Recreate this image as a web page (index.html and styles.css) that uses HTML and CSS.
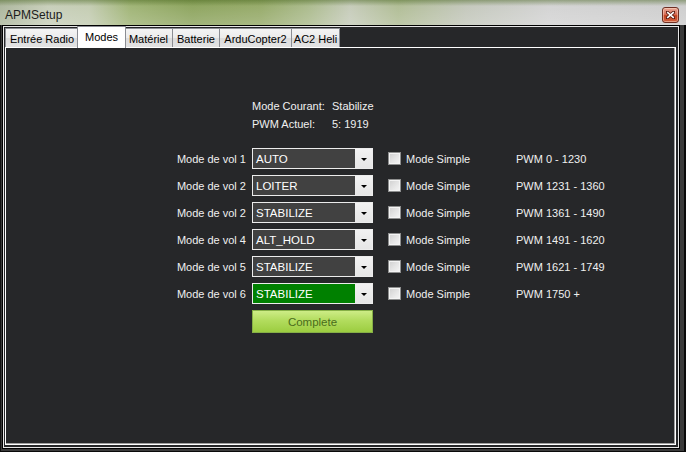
FILE: index.html
```html
<!DOCTYPE html>
<html>
<head>
<meta charset="utf-8">
<link rel="stylesheet" href="styles.css">
</head>
<body>
<div class="window">
  <div class="titlebar">
    <span class="title">APMSetup</span>
    <div class="close">
      <svg width="9" height="8" viewBox="0 0 9 8"><path d="M1 1 L8 7 M8 1 L1 7" stroke="#5a1a10" stroke-width="3.2" stroke-linecap="square"/><path d="M1.2 1.2 L7.8 6.8 M7.8 1.2 L1.2 6.8" stroke="#fff" stroke-width="1.6"/></svg>
    </div>
  </div>
  <div class="client">
    <div class="tabs">
      <div class="tab t1">Entrée Radio</div>
      <div class="tab t2 active">Modes</div>
      <div class="tab t3">Matériel</div>
      <div class="tab t4">Batterie</div>
      <div class="tab t5">ArduCopter2</div>
      <div class="tab t6">AC2 Heli</div>
    </div>
    <div class="panel">
      <div class="info">
        <div class="info-row"><span class="key">Mode Courant:</span><span>Stabilize</span></div>
        <div class="info-row"><span class="key">PWM Actuel:</span><span>5: 1919</span></div>
      </div>
      <div class="rows">
        <div class="row">
          <span class="label">Mode de vol 1</span>
          <div class="combo"><span class="val">AUTO</span><span class="btn"><span class="arrow"></span></span></div>
          <span class="cb"></span><span class="simple">Mode Simple</span><span class="pwm">PWM 0 - 1230</span>
        </div>
        <div class="row">
          <span class="label">Mode de vol 2</span>
          <div class="combo"><span class="val">LOITER</span><span class="btn"><span class="arrow"></span></span></div>
          <span class="cb"></span><span class="simple">Mode Simple</span><span class="pwm">PWM 1231 - 1360</span>
        </div>
        <div class="row">
          <span class="label">Mode de vol 2</span>
          <div class="combo"><span class="val">STABILIZE</span><span class="btn"><span class="arrow"></span></span></div>
          <span class="cb"></span><span class="simple">Mode Simple</span><span class="pwm">PWM 1361 - 1490</span>
        </div>
        <div class="row">
          <span class="label">Mode de vol 4</span>
          <div class="combo"><span class="val">ALT_HOLD</span><span class="btn"><span class="arrow"></span></span></div>
          <span class="cb"></span><span class="simple">Mode Simple</span><span class="pwm">PWM 1491 - 1620</span>
        </div>
        <div class="row">
          <span class="label">Mode de vol 5</span>
          <div class="combo"><span class="val">STABILIZE</span><span class="btn"><span class="arrow"></span></span></div>
          <span class="cb"></span><span class="simple">Mode Simple</span><span class="pwm">PWM 1621 - 1749</span>
        </div>
        <div class="row">
          <span class="label">Mode de vol 6</span>
          <div class="combo current"><span class="val">STABILIZE</span><span class="btn"><span class="arrow"></span></span></div>
          <span class="cb"></span><span class="simple">Mode Simple</span><span class="pwm">PWM 1750 +</span>
        </div>
      </div>
      <div class="complete">Complete</div>
    </div>
  </div>
</div>
</body>
</html>
```
FILE: styles.css
```css
* { box-sizing: border-box; }
html, body { margin: 0; padding: 0; }
body {
  width: 686px;
  height: 452px;
  overflow: hidden;
  font-family: "Liberation Sans", Arial, sans-serif;
  font-size: 11px;
}
.window {
  width: 686px;
  height: 452px;
  background: #3a3a3a;
  display: flex;
  flex-direction: column;
  box-shadow: inset -2px -1px 0 #0a0a0a, inset 1px 0 0 #111;
}
.titlebar {
  height: 25px;
  flex: none;
  display: flex;
  align-items: center;
  padding: 0 7px 0 5px;
  background:
    linear-gradient(to bottom, rgba(70, 100, 30, 0.45) 0, rgba(70, 100, 30, 0) 6px),
    linear-gradient(to bottom, rgba(255, 255, 255, 0) 0, rgba(255, 255, 255, 0.2) 100%),
    linear-gradient(to right, #aab49a 0%, #c6cdb8 7%, #c2cbb0 13%, #9db272 19%, #8aa25a 28%, #93a865 38%, #a9b98a 45%, #c4cab8 51%, #aebb92 58%, #c2c6ba 68%, #d2d2d2 80%, #cccccc 100%);
}
.title {
  font-size: 12px;
  color: #1c1c1c;
  padding-top: 4px;
}
.close {
  margin-left: auto;
  margin-top: 4px;
  width: 17px;
  height: 16px;
  border: 1px solid #6e2e22;
  border-radius: 3px;
  background: linear-gradient(to bottom, #eaa898 0%, #d8705a 45%, #c4401f 55%, #d0603e 100%);
  box-shadow: inset 0 0 0 1px rgba(255, 220, 200, 0.5);
  display: flex;
  align-items: center;
  justify-content: center;
}
.client {
  flex: 1;
  margin: 0 6px 3px 2px;
  border: 1px solid #000;
  box-shadow: inset 0 0 0 1px #e6e6e6;
  padding: 1px;
  background: #262729;
  display: flex;
  flex-direction: column;
}
.tabs {
  height: 20px;
  flex: none;
  display: flex;
  padding-left: 1px;
  position: relative;
  z-index: 2;
}
.tab {
  margin-top: 1px;
  height: 19px;
  border: 1px solid #8b8d93;
  border-bottom: none;
  background: linear-gradient(to bottom, #f4f4f4 0%, #ebebeb 50%, #dcdcdc 51%, #e2e2e2 100%);
  color: #000;
  display: flex;
  align-items: center;
  justify-content: center;
  margin-left: -1px;
  padding-top: 1px;
}
.t1 { width: 74px; margin-left: 0; }
.t2 { width: 47px; }
.t3 { width: 49px; }
.t4 { width: 48px; }
.t5 { width: 73px; }
.t6 { width: 49px; }
.tab.active {
  margin-top: -1px;
  height: 22px;
  background: #ffffff;
  position: relative;
  z-index: 3;
  padding-bottom: 2px;
  border-color: #8b8d93;
  width: 49px;
  margin-left: -2px;
  margin-right: -1px;
}
.panel {
  flex: 1;
  margin: 0 2px 2px 1px;
  border: 1px solid #ffffff;
  box-shadow: inset -1px -1px 0 #a0a0a0;
  background: #262729;
  color: #f0f0f0;
  padding-top: 49px;
}
.info {
  margin-left: 246px;
}
.info-row {
  display: flex;
  height: 18px;
  align-items: center;
}
.key {
  width: 80px;
}
.rows {
  margin-top: 12px;
}
.row {
  display: flex;
  align-items: center;
  height: 27px;
}
.label {
  width: 240px;
  text-align: right;
}
.combo {
  margin-left: 6px;
  width: 121px;
  height: 21px;
  border: 1px solid #ececec;
  background: #414141;
  display: flex;
  align-items: stretch;
  color: #ffffff;
}
.combo.current {
  background: #008000;
}
.val {
  flex: 1;
  display: flex;
  align-items: center;
  padding-left: 3px;
  font-size: 11.5px;
  padding-top: 1px;
}
.btn {
  width: 17px;
  background: linear-gradient(to bottom, #f2f2f2, #e6e6e6);
  display: flex;
  align-items: center;
  justify-content: center;
  padding-top: 1px;
}
.arrow {
  width: 0;
  height: 0;
  border-left: 3px solid transparent;
  border-right: 3px solid transparent;
  border-top: 3px solid #000;
}
.cb {
  margin-left: 15px;
  width: 13px;
  height: 13px;
  border: 1px solid #8e8f8f;
  background: linear-gradient(135deg, #cfcfcf 0%, #e4e4e4 50%, #f6f6f6 100%);
  box-shadow: inset 0 0 0 1px #f4f4f4;
}
.simple {
  margin-left: 5px;
  width: 110px;
}
.complete {
  margin: 3px 0 0 246px;
  width: 121px;
  height: 23px;
  border: 1px solid #86b046;
  background: linear-gradient(to bottom, #cdec86 0%, #b2dc5e 45%, #9ccd40 100%);
  color: #4a6c1c;
  display: flex;
  align-items: center;
  justify-content: center;
  font-size: 11.5px;
}
```
